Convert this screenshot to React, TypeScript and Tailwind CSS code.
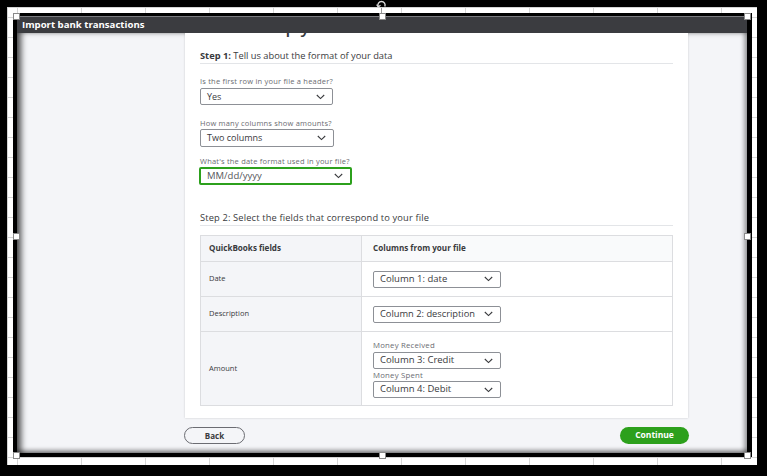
import React from "react";

const font = { fontFamily: '"Open Sans", "Liberation Sans", sans-serif' };

function Chevron() {
  return (
    <svg width="9" height="6" viewBox="0 0 9 6" className="shrink-0">
      <path d="M0.8 1l3.7 3.6L8.2 1" fill="none" stroke="#393a3d" strokeWidth="1.1" />
    </svg>
  );
}

function Select({
  value,
  className,
  textClass = "text-[9px]",
}: {
  value: string;
  className: string;
  textClass?: string;
}) {
  return (
    <div
      className={`flex items-center justify-between rounded-[2px] bg-white pl-[6px] pr-[7px] text-[#393a3d] ${textClass} ${className}`}
    >
      <span className="whitespace-nowrap">{value}</span>
      <Chevron />
    </div>
  );
}

function Handle({ className }: { className: string }) {
  return <div className={`absolute h-[7px] w-[7px] border border-[#8a8a8a] bg-white ${className}`} />;
}

export default function App() {
  return (
    <div className="relative h-[476px] w-[767px] overflow-hidden bg-black pl-[7px] pt-[7px]" style={font}>
      {/* rotate handle */}
      <div className="absolute left-[376px] top-0 flex flex-col items-center">
        <svg width="11" height="8" viewBox="0 0 11 8">
          <path d="M2.2 6.5A3.6 3.6 0 1 1 8.8 6.5" fill="none" stroke="#d9d9d9" strokeWidth="1.4" />
          <path d="M0.6 4.6l1.7 2.3 2.2-1.6" fill="none" stroke="#d9d9d9" strokeWidth="1.2" />
        </svg>
        <div className="h-[5px] w-px bg-[#9a9a9a]" />
      </div>

      {/* sheet */}
      <div className="h-[458px] w-[750px] border-l border-t border-[#d4d4d4] bg-white pl-[5px] pt-[5px] [background-image:linear-gradient(to_right,#d6d6d6_1px,transparent_1px),linear-gradient(to_bottom,#d6d6d6_1px,transparent_1px)] [background-position:9px_9px] [background-size:64px_20px]">
        {/* picture frame */}
        <div className="relative h-[444px] w-[739px] bg-black pl-[4px] pt-[3px]">
          <div className="flex h-[437px] w-[730px] flex-col overflow-hidden">
            <div className="flex h-[17px] shrink-0 items-center border-t border-[#7a7b7f] bg-[#3b3c40] pl-[5px] text-[9.6px] font-bold text-white">
              Import bank transactions
            </div>
            <div className="relative h-[420px] overflow-hidden bg-[#f4f5f8] pl-[168px] shadow-[inset_6px_0_6px_-2px_rgba(0,0,0,0.7),inset_-5px_0_4px_-2px_rgba(0,0,0,0.35),inset_0_-5px_4px_-2px_rgba(0,0,0,0.35)]">
              <div className="mt-[-16px] w-[503px] bg-white px-[15px] pb-[12px] text-[#393a3d] shadow-[0_0_2px_rgba(0,0,0,0.18)]">
                <div className="h-[20px] pl-[3px] text-[17px] font-semibold leading-[20px] whitespace-nowrap">
                  Let's set up your file
                </div>

                <div className="mt-[13px] border-b border-[#e3e5e8] pb-[1px] text-[9.3px] font-medium leading-[12px]">
                  <span className="font-bold">Step 1:</span> Tell us about the format of your data
                </div>

                <div className="mt-[12px] text-[7.5px] leading-[10px] tracking-[0.2px] text-[#6b6c72]">Is the first row in your file a header?</div>
                <Select value="Yes" className="mt-[2px] h-[17px] w-[133px] border border-[#8d9096]" />

                <div className="mt-[13px] text-[7.5px] leading-[10px] tracking-[0.2px] text-[#6b6c72]">How many columns show amounts?</div>
                <Select value="Two columns" className="mt-[1px] h-[18px] w-[134px] border border-[#8d9096]" />

                <div className="mt-[9px] text-[7.5px] leading-[10px] tracking-[0.2px] text-[#6b6c72]">What's the date format used in your file?</div>
                <Select
                  value="MM/dd/yyyy"
                  textClass="text-[9.5px] text-[#55565b]"
                  className="ml-[-1px] mt-[1px] h-[18px] w-[153px] border-2 border-[#2ca01c] pl-[4px]"
                />

                <div className="mt-[27px] border-b border-[#e3e5e8] pb-[1px] text-[9.3px] font-medium leading-[12px] tracking-[0.15px]">
                  Step 2: Select the fields that correspond to your file
                </div>

                <div className="mt-[9px] border border-[#dcdde0]">
                  <div className="flex h-[26px] border-b border-[#dcdde0] text-[8.1px] font-bold">
                    <div className="flex w-[161px] items-center border-r border-[#dcdde0] bg-[#f4f5f8] pl-[8px]">QuickBooks fields</div>
                    <div className="flex flex-1 items-center bg-[#f9fafb] pl-[11px]">Columns from your file</div>
                  </div>
                  <div className="flex h-[35px] border-b border-[#dcdde0]">
                    <div className="flex w-[161px] items-center border-r border-[#dcdde0] bg-[#f4f5f8] pl-[8px] text-[7.5px]">Date</div>
                    <div className="flex flex-1 items-center pl-[11px]">
                      <Select value="Column 1: date" textClass="text-[9.5px] text-[#4a4b50]" className="h-[17px] w-[128px] border border-[#8d9096]" />
                    </div>
                  </div>
                  <div className="flex h-[35px] border-b border-[#dcdde0]">
                    <div className="flex w-[161px] items-center border-r border-[#dcdde0] bg-[#f4f5f8] pl-[8px] text-[7.5px]">Description</div>
                    <div className="flex flex-1 items-center pl-[11px]">
                      <Select value="Column 2: description" textClass="text-[9.3px] text-[#4a4b50]" className="h-[17px] w-[128px] border border-[#8d9096] pr-[5px]" />
                    </div>
                  </div>
                  <div className="flex h-[73px]">
                    <div className="flex w-[161px] items-center border-r border-[#dcdde0] bg-[#f4f5f8] pl-[8px] text-[7.5px]">Amount</div>
                    <div className="flex-1 pl-[11px] pt-[8px]">
                      <div className="text-[7.8px] leading-[10px] tracking-[0.2px] text-[#6b6c72]">Money Received</div>
                      <Select value="Column 3: Credit" textClass="text-[9.5px] text-[#4a4b50]" className="mt-[2px] h-[17px] w-[128px] border border-[#8d9096]" />
                      <div className="mt-[1px] text-[7.8px] leading-[10px] tracking-[0.2px] text-[#6b6c72]">Money Spent</div>
                      <Select value="Column 4: Debit" textClass="text-[9.5px] text-[#4a4b50]" className="mt-[1px] h-[17px] w-[128px] border border-[#8d9096]" />
                    </div>
                  </div>
                </div>
              </div>

              <div className="ml-[-1px] mt-[9px] flex w-[505px] items-center justify-between">
                <button className="flex h-[17px] w-[61px] items-center justify-center rounded-full border border-[#6b6c72] bg-transparent text-[8px] font-bold text-[#393a3d]">
                  Back
                </button>
                <button className="flex h-[17px] w-[69px] items-center justify-center rounded-full bg-[#2ca01c] text-[8.5px] font-bold text-white">
                  Continue
                </button>
              </div>
            </div>
          </div>

          <Handle className="left-0 top-0" />
          <Handle className="left-[366px] top-0" />
          <Handle className="left-[731px] top-0" />
          <Handle className="left-0 top-[220px]" />
          <Handle className="left-[731px] top-[220px]" />
          <Handle className="left-0 top-[439px]" />
          <Handle className="left-[366px] top-[439px]" />
          <Handle className="left-[731px] top-[439px]" />
        </div>
      </div>
    </div>
  );
}
